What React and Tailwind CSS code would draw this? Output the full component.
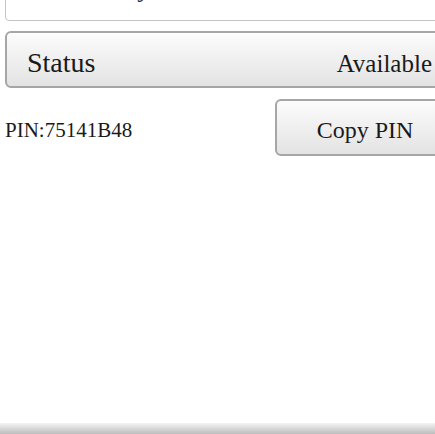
export default function App() {
  const serif = { fontFamily: '"Liberation Serif", "Times New Roman", serif' };

  return (
    <div
      className="flex h-[434px] w-[435px] flex-col overflow-hidden bg-white text-[#1a1a1a]"
      style={serif}
    >
      <div className="flex flex-col pl-[5px]">
        {/* INPUT (scrolled off the top) */}
        <div className="mt-[-37px] flex h-[58px] w-[450px] items-center rounded-[4px] border border-[#c4c4c4] bg-white pb-[8px] pl-[22px] text-[26px] text-[#333]">
          Availability
        </div>

        {/* STATUS ROW */}
        <div className="mt-[10px] flex h-[57px] w-[440px] items-center justify-between rounded-[6px] border-2 border-[#a6a6a6] bg-gradient-to-b from-[#fcfcfc] to-[#e3e3e3] pl-[20px] pr-[11px] pt-[7px] shadow-[inset_0_1px_0_#ffffff]">
          <span className="text-[28px] leading-none">Status</span>
          <span className="text-[25px] leading-none">Available</span>
        </div>

        {/* PIN ROW */}
        <div className="mt-[11px] flex h-[57px] items-center">
          <span className="flex-1 pt-[5px] text-[21px] leading-none">PIN:75141B48</span>
          <button className="mr-[-20px] flex h-[57px] w-[180px] items-center justify-center rounded-[6px] border-2 border-[#a6a6a6] bg-gradient-to-b from-[#fcfcfc] to-[#e3e3e3] pt-[4px] text-[24px] leading-none text-[#1a1a1a]">
            Copy PIN
          </button>
        </div>
      </div>

      {/* BOTTOM SHADE */}
      <div className="mt-auto h-[11px] bg-gradient-to-b from-[#f4f4f4] to-[#bdbdbd]" />
    </div>
  );
}
